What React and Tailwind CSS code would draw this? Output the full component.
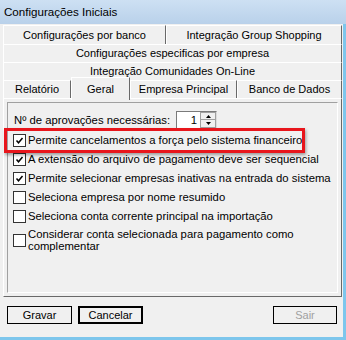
import React from 'react';

const Tab = ({ label, w, selected }) => (
  <div
    className={
      selected
        ? 'relative z-10 -mt-[3px] h-[23px] flex items-start justify-center pt-[3px] bg-[#f0f0f0] border-t border-l border-white border-r border-r-[#696969] shrink-0'
        : 'h-full flex items-center justify-center bg-[#f0f0f0] border-t border-l border-white border-r border-r-[#696969] shrink-0'
    }
    style={{ width: w }}
  >
    {label}
  </div>
);

const CheckBox = ({ checked }) => (
  <div className="w-[13px] h-[13px] shrink-0 bg-white border border-[#333333] flex items-center justify-center">
    {checked && (
      <svg width="11" height="11" viewBox="0 0 11 11">
        <path d="M2.5 5.5 L4.5 7.8 L8.5 3" fill="none" stroke="#000" strokeWidth="1.5" />
      </svg>
    )}
  </div>
);

const Option = ({ checked, children, tall }) => (
  <div className={tall ? 'flex items-center gap-[2px] pt-[2px]' : 'h-[19px] flex items-center gap-[2px]'}>
    <CheckBox checked={checked} />
    <span className={tall ? 'leading-[12px]' : ''}>{children}</span>
  </div>
);

const App = () => {
  return (
    <div className="relative w-[346px] h-[340px] overflow-hidden bg-[#f0f0f0] flex flex-col text-[11px] text-black font-['Liberation_Sans',Arial,sans-serif]">
      {/* Title bar */}
      <div className="h-[24px] shrink-0 flex items-center pl-[4px] text-[11.6px] bg-gradient-to-b from-[#cde0f3] to-[#b9d1ea]">
        Configurações Iniciais
      </div>

      {/* Window body */}
      <div className="flex-1 flex flex-col border-r-[3px] border-b-[3px] border-[#7dc6ec]">
        <div className="flex flex-col pl-[3px] pt-[1px]">
          <div className="h-[19px] flex">
            <Tab label="Configurações por banco" w={163} />
            <Tab label="Integração Group Shopping" w={176} />
          </div>
          <div className="h-[18px] flex">
            <Tab label="Configurações especificas por empresa" w={339} />
          </div>
          <div className="h-[18px] flex">
            <Tab label="Integração Comunidades On-Line" w={339} />
          </div>
          <div className="h-[18px] flex">
            <Tab label="Relatório" w={68} />
            <Tab label="Geral" w={59} selected />
            <Tab label="Empresa Principal" w={107} />
            <Tab label="Banco de Dados" w={105} />
          </div>
        </div>

        {/* Tab page */}
        <div className="ml-[3px] w-[339px] h-[199px] border border-white border-r-[#696969] border-b-[#696969] p-[3px]">
          <div className="h-full border border-[#a0a0a0] border-r-white border-b-white flex flex-col pl-[5px] text-[11.3px]">
            <div className="mt-[8px] h-[18px] flex items-center gap-[6px] pl-[1px]">
              <span>Nº de aprovações necessárias:</span>
              <div className="w-[41px] h-[18px] bg-white border border-[#7a7a7a] border-r-[#dcdcdc] border-b-[#dcdcdc] flex">
                <div className="flex-1 flex items-center justify-end pr-[3px]">1</div>
                <div className="w-[16px] flex flex-col">
                  <div className="h-1/2 bg-[#f0f0f0] border border-[#a0a0a0] flex items-center justify-center">
                    <svg width="5" height="3" viewBox="0 0 5 3"><path d="M2.5 0 L5 3 L0 3 Z" fill="#000" /></svg>
                  </div>
                  <div className="h-1/2 bg-[#f0f0f0] border border-t-0 border-[#a0a0a0] flex items-center justify-center">
                    <svg width="5" height="3" viewBox="0 0 5 3"><path d="M0 0 L5 0 L2.5 3 Z" fill="#000" /></svg>
                  </div>
                </div>
              </div>
            </div>
            <div className="mt-[2px] flex flex-col">
              <Option checked>Permite cancelamentos a força pelo sistema financeiro</Option>
              <Option checked>A extensão do arquivo de pagamento deve ser sequencial</Option>
              <Option checked>Permite selecionar empresas inativas na entrada do sistema</Option>
              <Option>Seleciona empresa por nome resumido</Option>
              <Option>Seleciona conta corrente principal na importação</Option>
              <Option tall>
                Considerar conta selecionada para pagamento como
                <br />
                complementar
              </Option>
            </div>
          </div>
        </div>

        {/* Buttons */}
        <div className="flex-1 flex items-start pt-[9px] pl-[7px] pr-[6px]">
          <button className="w-[65px] h-[18px] border border-black bg-[#f0f0f0] flex items-center justify-center">Gravar</button>
          <button className="ml-[6px] w-[65px] h-[18px] border-2 border-black bg-[#f0f0f0] flex items-center justify-center">Cancelar</button>
          <button className="ml-auto w-[64px] h-[18px] border border-black bg-[#f0f0f0] text-[#a0a0a0] flex items-center justify-center">Sair</button>
        </div>
      </div>

      {/* Red highlight annotation */}
      <div className="absolute left-[4px] top-[128px] w-[301px] h-[25px] border-[3px] border-[#e8161c] shadow-[1px_2px_3px_rgba(0,0,0,0.35)]" />
    </div>
  );
};

export default App;
